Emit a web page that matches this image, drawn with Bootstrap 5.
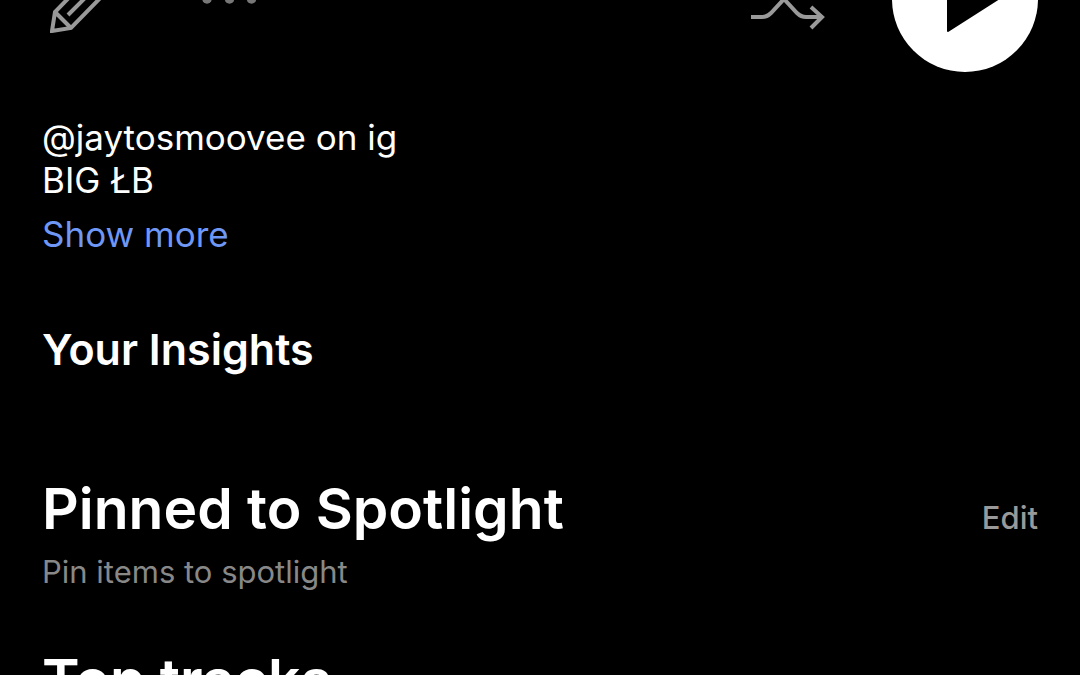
<!DOCTYPE html>
<html lang="en">
<head>
<meta charset="utf-8">
<meta name="viewport" content="width=device-width, initial-scale=1">
<title>Artist profile</title>
<link href="https://cdn.jsdelivr.net/npm/bootstrap@5.3.0/dist/css/bootstrap.min.css" rel="stylesheet">
<style>
  body { background: #000; color: #fff; font-family: "Inter", "Liberation Sans", sans-serif; overflow: hidden; }
  main { padding: 0 42px; }
  .toolbar { height: 146px; margin-top: -74px; color: #999; }
  .toolbar svg { display: block; }
  .tool-btn { background: none; border: 0; padding: 0; color: inherit; }
  .tool-group { gap: 84px; padding-left: 8px; }
  .play-group { gap: 67px; }
  .play-btn { width: 146px; height: 146px; background: #fff; color: #000; border: 0; padding: 0; }
  .bio { font-size: 35px; line-height: 43px; margin-top: 44px; }
  .more-link { font-size: 35px; line-height: 44px; margin-top: 10px; color: #6f97f5; }
  .section-title { font-size: 43px; line-height: 52px; font-weight: 600; margin-top: 67px; }
  .big-title { font-size: 57px; line-height: 70px; font-weight: 600; }
  .pinned { margin-top: 99px; }
  .edit-btn { font-size: 31px; line-height: 40px; font-weight: 500; color: #999; padding-bottom: 6px; }
  .hint { font-size: 31px; line-height: 40px; color: #888; margin-top: 8px; }
  .tracks { margin-top: 53px; }
</style>
</head>
<body>
<main>
  <div class="toolbar d-flex align-items-center justify-content-between">
    <div class="tool-group d-flex align-items-center">
      <button class="tool-btn" type="button" aria-label="Edit profile">
        <svg width="68" height="68" viewBox="50 -35 68 68" fill="none" stroke="currentColor" stroke-width="4">
          <path d="M52 31 55 12 93-27Q99-33 105-27L109-23Q115-17 109-11L71 28ZM55 12 71 28M68 15 98-15"/>
        </svg>
      </button>
      <button class="tool-btn" type="button" aria-label="More options">
        <svg width="56" height="12" viewBox="202 -7 56 12" fill="#777">
          <circle cx="207" cy="-1" r="4.7"/><circle cx="229.5" cy="-1" r="4.7"/><circle cx="251.5" cy="-1" r="4.7"/>
        </svg>
      </button>
    </div>
    <div class="play-group d-flex align-items-center">
      <button class="tool-btn" type="button" aria-label="Shuffle">
        <svg width="74" height="62" viewBox="751 -32 74 62" fill="none" stroke="currentColor" stroke-width="4">
          <path d="M751 17H762Q767 17 771 13L797-15Q801-19 806-19H822M751-19H762Q767-19 771-15L797 13Q801 17 806 17H822M811 7 822 17 811 28M811-30 822-19 811-9"/>
        </svg>
      </button>
      <button class="play-btn rounded-circle" type="button" aria-label="Play">
        <svg width="146" height="146" viewBox="892 -74 146 146" fill="currentColor" stroke="currentColor" stroke-width="2" stroke-linejoin="round">
          <path d="M948-33V31L998-1Z"/>
        </svg>
      </button>
    </div>
  </div>

  <p class="bio mb-0">@jaytosmoovee on ig<br>BIG ŁB</p>
  <a class="more-link d-inline-block text-decoration-none" href="#">Show more</a>

  <h3 class="section-title mb-0">Your Insights</h3>

  <section class="pinned">
    <div class="d-flex align-items-end justify-content-between">
      <h2 class="big-title mb-0">Pinned to Spotlight</h2>
      <button class="tool-btn edit-btn" type="button">Edit</button>
    </div>
    <p class="hint mb-0">Pin items to spotlight</p>
  </section>

  <section class="tracks">
    <h2 class="big-title mb-0">Top tracks</h2>
  </section>
</main>
<script src="https://cdn.jsdelivr.net/npm/bootstrap@5.3.0/dist/js/bootstrap.bundle.min.js"></script>
</body>
</html>
